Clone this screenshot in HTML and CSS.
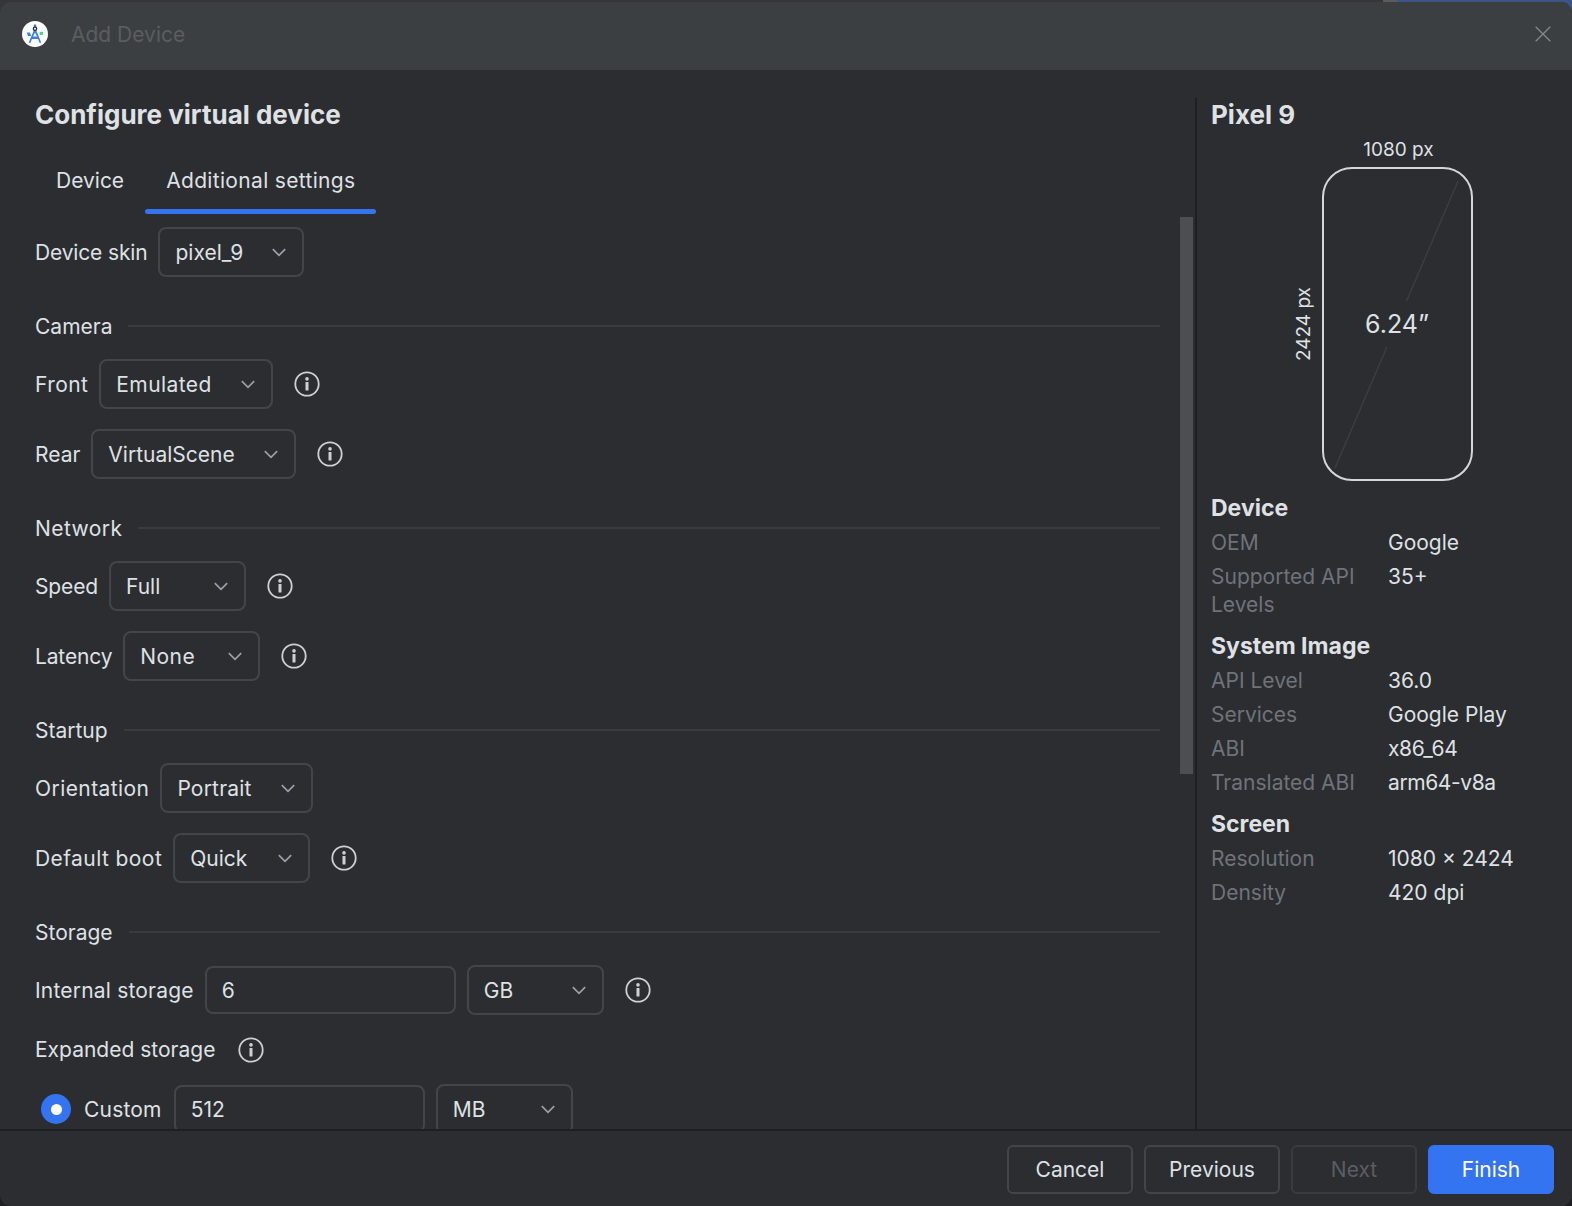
FILE: index.html
```html
<!DOCTYPE html>
<html lang="en">
<head>
<meta charset="utf-8">
<title>Add Device</title>
<link rel="stylesheet" href="styles.css">
</head>
<body>
<svg class="defs" width="0" height="0">
  <symbol id="chev" viewBox="0 0 16 16"><path d="M2.5 5.5 8 11l5.5-5.5" fill="none" stroke="currentColor" stroke-width="1.5"/></symbol>
  <symbol id="info" viewBox="0 0 26 26"><circle cx="13" cy="13" r="11.7" fill="none" stroke="currentColor" stroke-width="1.8"/><circle cx="13" cy="7.9" r="1.8" fill="currentColor"/><rect x="11.5" y="11" width="3" height="8.6" rx=".6" fill="currentColor"/></symbol>
</svg>
<div class="backdrop"></div>
<div class="window">
  <header class="titlebar">
    <svg class="logo" viewBox="0 0 26 26" width="26" height="26">
      <circle cx="13" cy="13" r="13" fill="#fff"/>
      <path d="M13 6.500 6.800 21.500l1.500.6 1.700-4h6l1.700 4 1.500-.6z" fill="#3b7cf0"/>
      <path d="M13 11.500 11 15.500h4z" fill="#fff"/>
      <path d="M4.800 11.500h3l1.400 3.400H6z" fill="#3b7cf0"/>
      <rect x="11.800" y="3.500" width="2.400" height="3" fill="#3b7cf0"/>
      <circle cx="13" cy="7.800" r="2.300" fill="#1e2a44"/>
      <circle cx="13" cy="7.800" r="1" fill="#fff"/>
      <rect x="17.700" y="10.800" width="3.200" height="3.200" fill="#3ddc84"/>
    </svg>
    <span class="title">Add Device</span>
    <svg class="close" viewBox="0 0 16 16" width="16" height="16"><path d="M.7.7l14.600 14.600M15.300.7.700 15.300" fill="none" stroke="currentColor" stroke-width="1.300"/></svg>
  </header>
  <div class="body">
    <main class="left">
      <h1 class="heading">Configure virtual device</h1>
      <nav class="tabs">
        <span class="tab">Device</span>
        <span class="tab active sp15">Additional settings</span>
      </nav>
      <div class="scroll-area">
        <div class="form">
          <div class="row"><span class="tight">Device skin</span><div class="select">pixel_9<svg class="chev"><use href="#chev"/></svg></div></div>
          <div class="section"><span>Camera</span><i></i></div>
          <div class="row"><span class="sp2">Front</span><div class="select"><span class="sp2">Emulated</span><svg class="chev"><use href="#chev"/></svg></div><svg class="info"><use href="#info"/></svg></div>
          <div class="row"><span>Rear</span><div class="select">VirtualScene<svg class="chev"><use href="#chev"/></svg></div><svg class="info"><use href="#info"/></svg></div>
          <div class="section"><span class="sp2">Network</span><i></i></div>
          <div class="row"><span class="tight">Speed</span><div class="select fixed">Full<svg class="chev"><use href="#chev"/></svg></div><svg class="info"><use href="#info"/></svg></div>
          <div class="row"><span class="tight">Latency</span><div class="select fixed"><span class="sp2">None</span><svg class="chev"><use href="#chev"/></svg></div><svg class="info"><use href="#info"/></svg></div>
          <div class="section"><span>Startup</span><i></i></div>
          <div class="row"><span class="sp2">Orientation</span><div class="select"><span class="sp1">Portrait</span><svg class="chev"><use href="#chev"/></svg></div></div>
          <div class="row"><span class="sp2">Default boot</span><div class="select fixed">Quick<svg class="chev"><use href="#chev"/></svg></div><svg class="info"><use href="#info"/></svg></div>
          <div class="section"><span>Storage</span><i></i></div>
          <div class="row"><span class="sp1">Internal storage</span><div class="input">6</div><div class="select fixed">GB<svg class="chev"><use href="#chev"/></svg></div><svg class="info"><use href="#info"/></svg></div>
          <div class="row plain"><span>Expanded storage</span><svg class="info"><use href="#info"/></svg></div>
          <div class="row radio-row"><span class="radio"></span><span class="sp1">Custom</span><div class="input">512</div><div class="select fixed">MB<svg class="chev"><use href="#chev"/></svg></div></div>
        </div>
        <div class="scrollbar"><div class="thumb"></div></div>
      </div>
    </main>
    <aside class="right">
      <h2 class="heading">Pixel 9</h2>
      <div class="preview">
        <div class="dim-top">1080 px</div>
        <div class="phone-row">
          <div class="dim-side">2424 px</div>
          <div class="phone">
            <svg class="diag" viewBox="0 0 151 314" width="151" height="314"><path d="M13 301 136 14" stroke="#3d3f44" stroke-width="1.300"/></svg>
            <span class="diagonal-size">6.24”</span>
          </div>
        </div>
      </div>
      <h3 class="spec-head">Device</h3>
      <dl class="specs">
        <dt>OEM</dt><dd>Google</dd>
        <dt>Supported API Levels</dt><dd>35+</dd>
      </dl>
      <h3 class="spec-head">System Image</h3>
      <dl class="specs">
        <dt>API Level</dt><dd>36.0</dd>
        <dt>Services</dt><dd>Google Play</dd>
        <dt>ABI</dt><dd class="tighter">x86_64</dd>
        <dt>Translated ABI</dt><dd class="tighter">arm64-v8a</dd>
      </dl>
      <h3 class="spec-head">Screen</h3>
      <dl class="specs">
        <dt>Resolution</dt><dd>1080 × 2424</dd>
        <dt>Density</dt><dd>420 dpi</dd>
      </dl>
    </aside>
  </div>
  <footer class="footer">
    <button class="btn">Cancel</button>
    <button class="btn wide">Previous</button>
    <button class="btn disabled">Next</button>
    <button class="btn primary">Finish</button>
  </footer>
</div>
</body>
</html>
```
FILE: styles.css
```css
* { box-sizing: border-box; }
html, body { margin: 0; height: 100%; }
body {
  background: #1e1f22;
  font-family: Inter, "Noto Sans", sans-serif;
  font-size: 21px;
  color: #dfe1e5;
  overflow: hidden;
  position: relative;
}
.defs { position: absolute; }
.backdrop {
  position: absolute;
  top: 0; left: 0; right: 0;
  height: 16px;
  background: linear-gradient(to right, #353638 0 1383px, #5b5b5b 1383px 1397px, #3d5488 1397px 100%);
}
.window {
  position: relative;
  height: 1204px;
  margin-top: 2px;
  display: flex;
  flex-direction: column;
  background: #2b2d30;
  border-radius: 11px;
  overflow: hidden;
}
.titlebar {
  height: 68px;
  flex: none;
  display: flex;
  align-items: center;
  padding: 0 21px 4px 22px;
  background: #3c3f41;
}
.logo { flex: none; }
.title { margin-left: 23px; color: #5a5d62; }
.close { margin-left: auto; color: #85888c; }
.body { flex: 1; min-height: 0; display: flex; padding-top: 28px; }
.left { flex: none; width: 1195px; display: flex; flex-direction: column; min-height: 0; padding-left: 35px; }
.heading { margin: 0; font-size: 26px; line-height: 34px; font-weight: 700; color: #dfe1e5; }
.tabs { display: flex; height: 68px; margin-top: 14px; flex: none; }
.tab { padding: 22px 21px 0; position: relative; color: #dfe1e5; }
.tab.active::after {
  content: "";
  position: absolute;
  left: 0; right: 0; bottom: 0;
  height: 5px;
  border-radius: 3px;
  background: #3574f0;
}
.sp1 { letter-spacing: .2px; }
.sp15 { letter-spacing: .33px; }
.sp2 { letter-spacing: .42px; }
.tight { letter-spacing: -.15px; }
.tighter { letter-spacing: -.4px; }
.scroll-area { flex: 1; min-height: 0; display: flex; overflow: hidden; padding-top: 13px; }
.form { width: 1125px; flex: none; display: flex; flex-direction: column; gap: 20px; }
.row { display: flex; align-items: center; gap: 11px; height: 50px; flex: none; }
.row.plain { height: 29px; gap: 23px; }
.radio-row { padding-left: 6px; gap: 13px; }
.radio-row .input { margin-left: -1px; }
.radio-row .select { margin-left: -2px; }
.section { display: flex; align-items: center; gap: 16px; height: 34px; margin-top: 12px; margin-bottom: -4px; color: #dfe1e5; flex: none; }
.section i { flex: 1; height: 2px; background: #393b40; }
.select, .input {
  height: 50px;
  display: flex;
  align-items: center;
  border: 2px solid #43454a;
  border-radius: 8px;
  padding-left: 15px;
  flex: none;
}
.select { gap: 27px; padding-right: 14px; }
.select.fixed { min-width: 137px; justify-content: space-between; }
.input { width: 251px; height: 48px; }
.chev { width: 18px; height: 18px; color: #9da0a8; flex: none; }
.info { width: 26px; height: 26px; color: #ced0d6; margin-left: 10px; flex: none; }
.plain .info { margin-left: 0; }
.radio { width: 30px; height: 30px; border-radius: 50%; background: #3574f0; position: relative; flex: none; }
.radio::after { content: ""; position: absolute; left: 9.500px; top: 9.500px; width: 11px; height: 11px; border-radius: 50%; background: #fff; }
.scrollbar { width: 13px; margin-left: 20px; flex: none; margin-top: -10px; }
.thumb { height: 557px; background: #4c4e52; }
.right {
  flex: 1;
  border-left: 2px solid #1e1f22;
  padding-left: 14px;
  padding-right: 20px;
  min-height: 0;
}
.preview { display: flex; flex-direction: column; align-items: center; width: 372px; margin-bottom: 8px; }
.dim-top { font-size: 19px; line-height: 26px; margin-top: 5px; padding-left: 3px; }
.phone-row { display: flex; align-items: center; margin-top: 4px; gap: 5px; padding-right: 31px; }
.dim-side { writing-mode: vertical-rl; transform: rotate(180deg); font-size: 19px; line-height: 26px; }
.phone { width: 151px; height: 314px; border: 2px solid #d4d6da; border-radius: 30px; position: relative; display: flex; align-items: center; justify-content: center; }
.diag { position: absolute; left: -2px; top: -2px; }
.diagonal-size { position: relative; font-size: 25px; padding: 8px 0; background: #2b2d30; }
.spec-head { margin: 10px 0 3px; font-size: 23px; line-height: 35px; font-weight: 700; }
.specs { margin: 0; display: grid; grid-template-columns: 177px 1fr; row-gap: 6px; line-height: 28px; }
.specs dt { color: #6f737a; }
.specs dd { margin: 0; color: #dfe1e5; }
.footer {
  height: 77px;
  flex: none;
  border-top: 2px solid #1e1f22;
  display: flex;
  justify-content: flex-end;
  align-items: flex-start;
  gap: 11px;
  padding: 14px 18px 0 0;
}
.btn {
  width: 126px;
  height: 49px;
  font: inherit;
  color: #dfe1e5;
  background: transparent;
  border: 2px solid #43454a;
  border-radius: 6px;
  padding: 0;
}
.btn.wide { width: 136px; }
.btn.disabled { color: #5a5d62; border-color: #393b40; }
.btn.primary { background: #3574f0; border-color: #3574f0; color: #fff; }
```
